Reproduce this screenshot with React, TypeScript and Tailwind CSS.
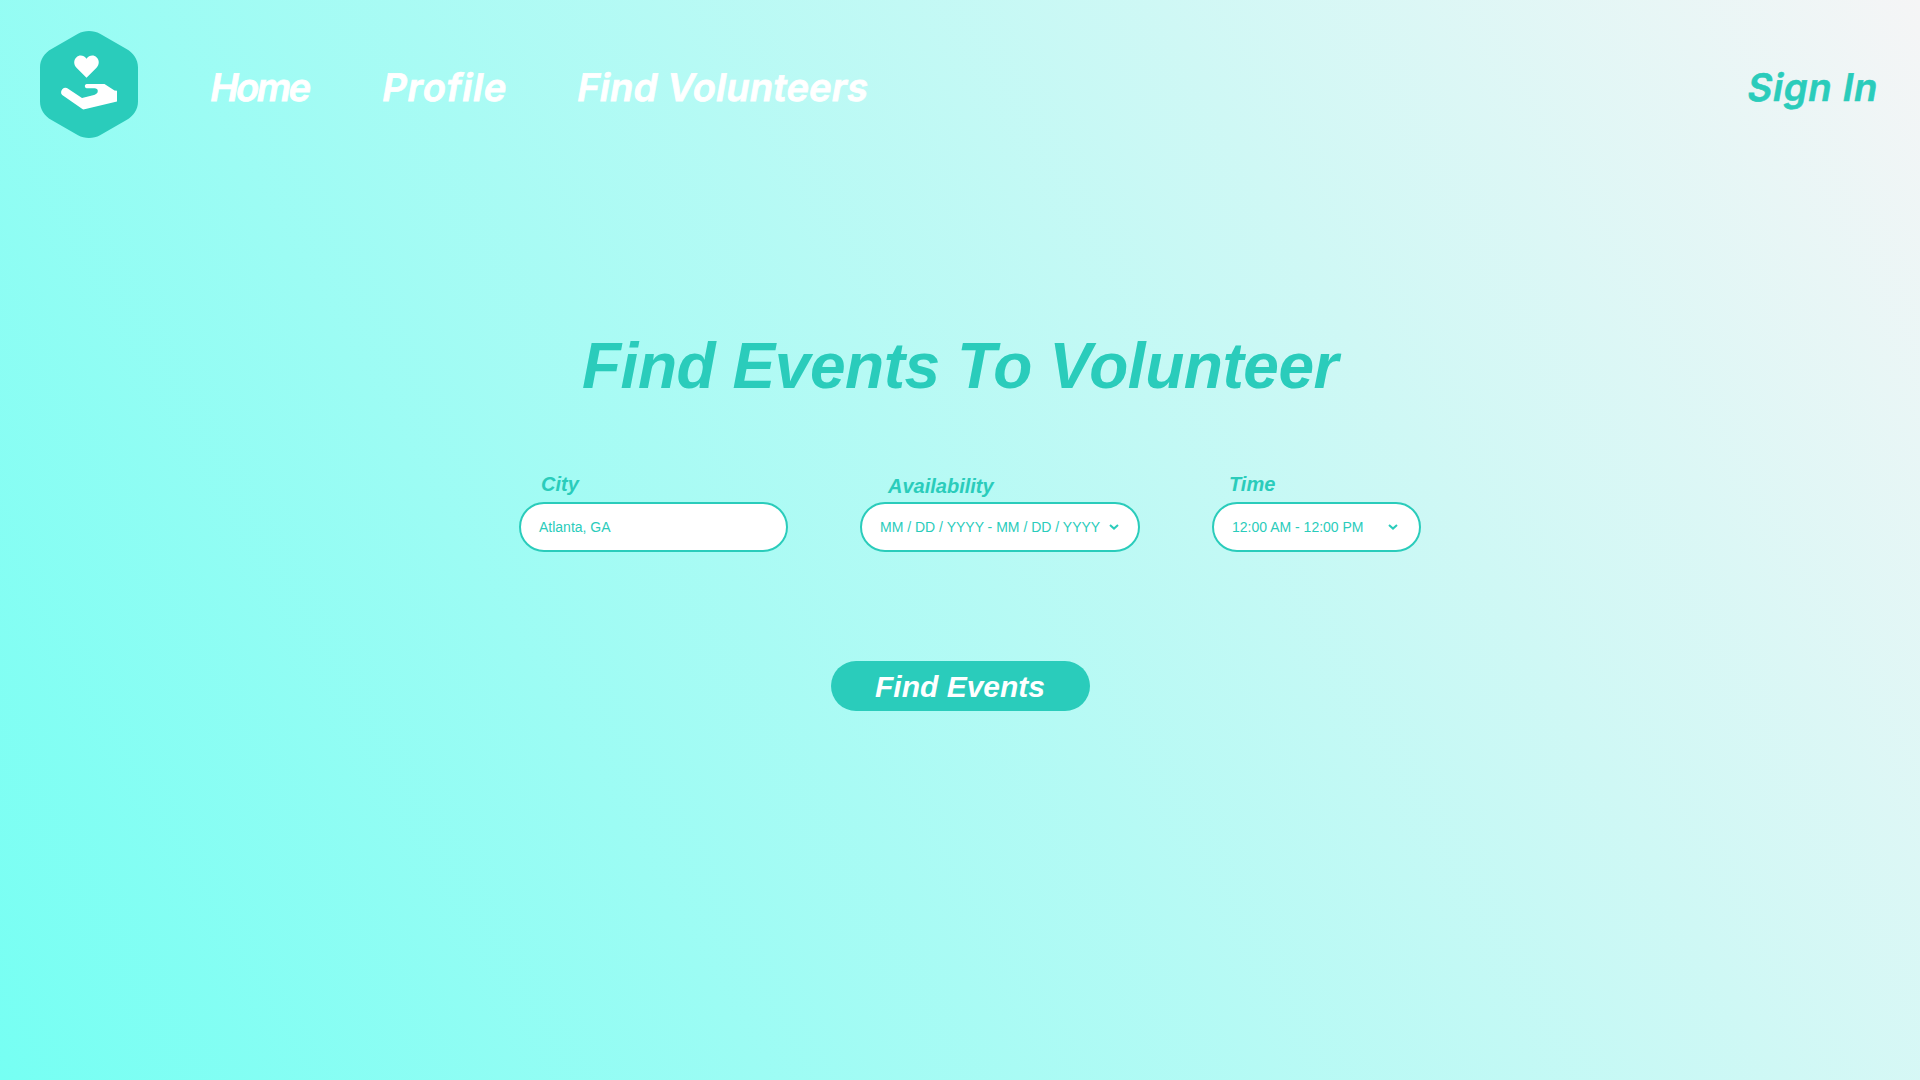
import React from 'react';

const navLinks = [
  { label: 'Home', className: 'ml-[73px] w-[101px] tracking-[-2.5px]' },
  { label: 'Profile', className: 'ml-[71px] w-[125px] tracking-[0.8px]' },
  { label: 'Find Volunteers', className: 'ml-[70px] w-[292px] tracking-[0.2px]' },
];

function Logo() {
  return (
    <svg className="h-[108px] w-[98px] shrink-0" viewBox="0 0 98 108" aria-label="Volunteer logo">
      <path
        fill="#2accbb"
        d="M38 2.700C44.500 -.9 53.500 -.9 60 2.700L86.500 18C93.500 22 98 28.500 98 36.500V70.500C98 78.500 93.500 85 86.500 89L60 104.300C53.500 107.900 44.500 107.900 38 104.300L11.500 89C4.500 85 0 78.500 0 70.500V36.500C0 28.500 4.500 22 11.500 18Z"
      />
      <path
        fill="#fff"
        d="M46.500 46.800L36.500 36.700C33.500 33.500 33.500 29 36.300 26.400C39.300 23.600 43.800 24.100 46.500 27.700C49.200 24.100 53.700 23.600 56.700 26.400C59.500 29 59.500 33.500 56.500 36.700Z"
      />
      <path
        fill="#fff"
        d="M22.500 58C24.300 56.200 26.500 56.500 28.500 58L42 67L53 64.300C55.500 63.600 57.800 62.600 57.800 60C57.800 58 56.500 57.200 54.500 57.200H46.700C44.300 57.200 44.300 53 46.700 53H64.500L74.500 59.400L77 59.800V70.500L44.500 78.300C43.500 78.500 42.800 78.400 42 77.800L22.200 64C20.500 62.500 20.800 59.700 22.500 58Z"
      />
    </svg>
  );
}

function Chevron() {
  return (
    <svg className="h-[6px] w-[10px] shrink-0" viewBox="0 0 10 6" fill="none">
      <path d="M1 1L5 4.600L9 1" stroke="#2accbb" strokeWidth="2" />
    </svg>
  );
}

export default function App() {
  return (
    <div className="flex h-[1080px] w-[1920px] flex-col overflow-hidden bg-[linear-gradient(60deg,#76fff3,#f5f5f6)] font-['Liberation_Sans',Arial,sans-serif] text-[#2accbb]">
      <header className="flex h-[138px] items-start pt-[31px] pr-[38px] pl-[40px]">
        <Logo />
        <nav className="flex pt-[32px] font-['Inter',sans-serif] text-[38px] leading-[48px] font-semibold text-white [-webkit-text-stroke:0.8px_white] [paint-order:stroke_fill]">
          {navLinks.map((link) => (
            <a key={link.label} href="#" className={`-skew-x-[10deg] whitespace-nowrap ${link.className}`}>
              {link.label}
            </a>
          ))}
        </nav>
        <a
          href="#"
          className="ml-auto -skew-x-[10deg] pt-[32px] font-['Inter',sans-serif] text-[38px] leading-[48px] font-semibold tracking-[0.8px] whitespace-nowrap [-webkit-text-stroke:0.6px_#2accbb]"
        >
          Sign In
        </a>
      </header>

      <main className="flex flex-col">
        <h1 className="mt-[192px] self-center text-[64px] leading-[72px] font-bold tracking-[-0.45px] whitespace-nowrap italic">
          Find Events To Volunteer
        </h1>

        <form className="mt-[70px] ml-[519px] flex gap-[72px]">
          <label className="flex w-[269px] flex-col">
            <span className="pl-[22px] text-[20px] leading-[24px] font-bold italic">City</span>
            <span className="mt-[6px] flex h-[50px] items-center rounded-full border-2 border-[#2accbb] bg-white pl-[18px] text-[14px]">
              Atlanta, GA
            </span>
          </label>
          <label className="flex w-[280px] flex-col">
            <span className="pt-[2px] pl-[28px] text-[20px] leading-[24px] font-bold italic">Availability</span>
            <span className="mt-[4px] flex h-[50px] items-center justify-between rounded-full border-2 border-[#2accbb] bg-white pr-[19px] pl-[18px] text-[14px] whitespace-nowrap">
              MM / DD / YYYY - MM / DD / YYYY
              <Chevron />
            </span>
          </label>
          <label className="flex w-[209px] flex-col">
            <span className="pl-[17px] text-[20px] leading-[24px] font-bold italic">Time</span>
            <span className="mt-[6px] flex h-[50px] items-center justify-between rounded-full border-2 border-[#2accbb] bg-white pr-[21px] pl-[18px] text-[14px] whitespace-nowrap">
              12:00 AM - 12:00 PM
              <Chevron />
            </span>
          </label>
        </form>

        <button
          type="button"
          className="mt-[109px] h-[50px] w-[259px] self-center rounded-full bg-[#2accbb] text-[30px] font-bold text-white italic"
        >
          Find Events
        </button>
      </main>
    </div>
  );
}
